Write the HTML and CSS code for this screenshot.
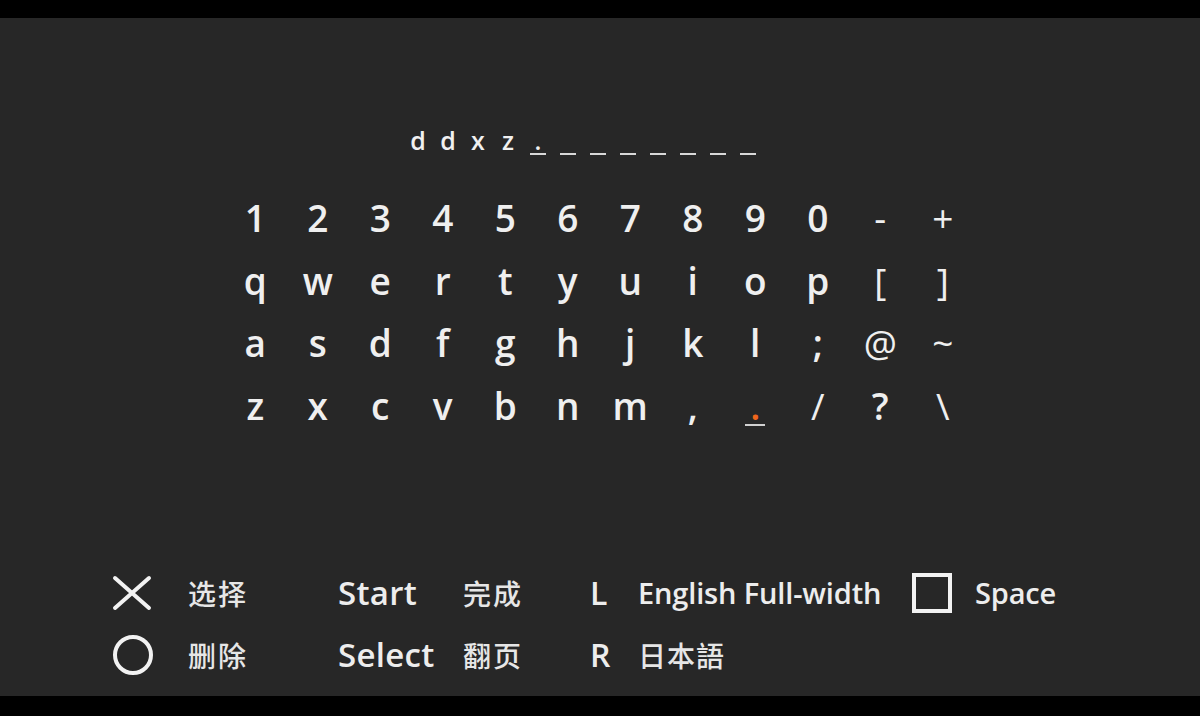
FILE: index.html
```html
<!DOCTYPE html>
<html lang="zh">
<head>
<meta charset="utf-8">
<title>Keyboard</title>
<link rel="stylesheet" href="styles.css">
</head>
<body>
<div class="bar-top"></div>
<main class="screen">
  <div class="input">
    <div class="cell"><span class="ch">d</span></div>
    <div class="cell"><span class="ch">d</span></div>
    <div class="cell"><span class="ch">x</span></div>
    <div class="cell"><span class="ch">z</span></div>
    <div class="cell"><span class="ch">.</span><span class="line"></span></div>
    <div class="cell"><span class="ch"></span><span class="line"></span></div>
    <div class="cell"><span class="ch"></span><span class="line"></span></div>
    <div class="cell"><span class="ch"></span><span class="line"></span></div>
    <div class="cell"><span class="ch"></span><span class="line"></span></div>
    <div class="cell"><span class="ch"></span><span class="line"></span></div>
    <div class="cell"><span class="ch"></span><span class="line"></span></div>
    <div class="cell"><span class="ch"></span><span class="line"></span></div>
  </div>

  <div class="keys">
    <span>1</span><span>2</span><span>3</span><span>4</span><span>5</span><span>6</span><span>7</span><span>8</span><span>9</span><span>0</span><span class="thin">-</span><span class="thin">+</span>
    <span>q</span><span>w</span><span>e</span><span>r</span><span>t</span><span>y</span><span>u</span><span>i</span><span>o</span><span>p</span><span class="thin">[</span><span class="thin">]</span>
    <span>a</span><span>s</span><span>d</span><span>f</span><span>g</span><span>h</span><span>j</span><span>k</span><span>l</span><span>;</span><span class="thin">@</span><span class="thin">~</span>
    <span>z</span><span>x</span><span>c</span><span>v</span><span>b</span><span>n</span><span>m</span><span>,</span><span class="sel"><span class="dot">.</span><span class="uline"></span></span><span class="thin">/</span><span>?</span><span class="thin">\</span>
  </div>

  <div class="legend">
    <div class="icon">
      <svg width="40" height="36" viewBox="0 0 40 36"><path d="M3 3 L37 33 M37 3 L3 33" stroke="#f2f2f2" stroke-width="4" stroke-linecap="round" fill="none"/></svg>
    </div>
    <div class="cjk">选择</div>
    <div class="btn">Start</div>
    <div class="cjk">完成</div>
    <div class="btn lr">L</div>
    <div class="label">English Full-width</div>
    <div class="icon">
      <svg width="40" height="40" viewBox="0 0 40 40"><rect x="2" y="2" width="36" height="36" stroke="#f2f2f2" stroke-width="4" fill="none"/></svg>
    </div>
    <div class="label">Space</div>

    <div class="icon">
      <svg width="42" height="40" viewBox="0 0 42 40"><circle cx="21" cy="20" r="18" stroke="#f2f2f2" stroke-width="4" fill="none"/></svg>
    </div>
    <div class="cjk">删除</div>
    <div class="btn">Select</div>
    <div class="cjk">翻页</div>
    <div class="btn lr">R</div>
    <div class="cjk jp">日本語</div>
    <div></div>
    <div></div>
  </div>
</main>
<div class="bar-bottom"></div>
</body>
</html>
```

FILE: styles.css
```css
html, body {
  margin: 0;
  padding: 0;
  background: #000;
}

body {
  width: 1200px;
  height: 716px;
  overflow: hidden;
  font-family: "Open Sans", "Noto Sans", sans-serif;
  color: #ececec;
}

.bar-top {
  height: 18px;
  background: #000;
}

.bar-bottom {
  height: 20px;
  background: #000;
}

.screen {
  height: 678px;
  background: #272727;
  display: flex;
  flex-direction: column;
  align-items: flex-start;
}

/* input field */
.input {
  display: flex;
  margin-top: 110px;
  margin-left: 403px;
}

.cell {
  width: 30px;
  height: 27px;
  display: flex;
  flex-direction: column;
  align-items: center;
}

.ch {
  height: 25px;
  line-height: 25px;
  font-size: 25px;
  font-weight: 600;
  color: #f0f0f0;
}

.line {
  width: 16px;
  height: 2px;
  background: #d8d8d8;
}

/* key grid */
.keys {
  margin-top: 32px;
  margin-left: 224px;
  display: grid;
  grid-template-columns: repeat(12, 62.5px);
  grid-auto-rows: 62.5px;
  font-size: 37px;
  font-weight: 600;
  line-height: 62.5px;
  color: #efefef;
}

.keys > span {
  text-align: center;
}

.keys .thin {
  font-weight: 400;
}

.keys .sel {
  display: flex;
  flex-direction: column;
  align-items: center;
}

.keys .dot {
  height: 49px;
  line-height: 62.5px;
  color: #f0661c;
  overflow: visible;
}

.keys .uline {
  width: 20px;
  height: 2px;
  background: #d0d0d0;
}

/* legend */
.legend {
  margin-top: 125px;
  margin-left: 112px;
  display: grid;
  grid-template-columns: 76px 150px 125px 127px 48px 274px 63px auto;
  grid-auto-rows: 62px;
  align-items: center;
}

.icon {
  display: flex;
  align-items: center;
  height: 62px;
}

.btn {
  font-size: 33px;
  font-weight: 600;
  line-height: 62px;
  letter-spacing: 0.3px;
  color: #ededed;
}

.btn.lr {
  font-size: 32px;
}

.label {
  font-size: 29px;
  font-weight: 600;
  line-height: 62px;
  letter-spacing: -0.15px;
  color: #ededed;
}

.cjk {
  font-family: "Noto Sans CJK SC", "Noto Sans CJK JP", sans-serif;
  font-size: 28px;
  font-weight: 500;
  line-height: 62px;
  color: #e6e6e6;
  letter-spacing: 2px;
}

.cjk.jp {
  font-family: "Noto Sans CJK JP", "Noto Sans CJK SC", sans-serif;
  letter-spacing: 1px;
}
```
